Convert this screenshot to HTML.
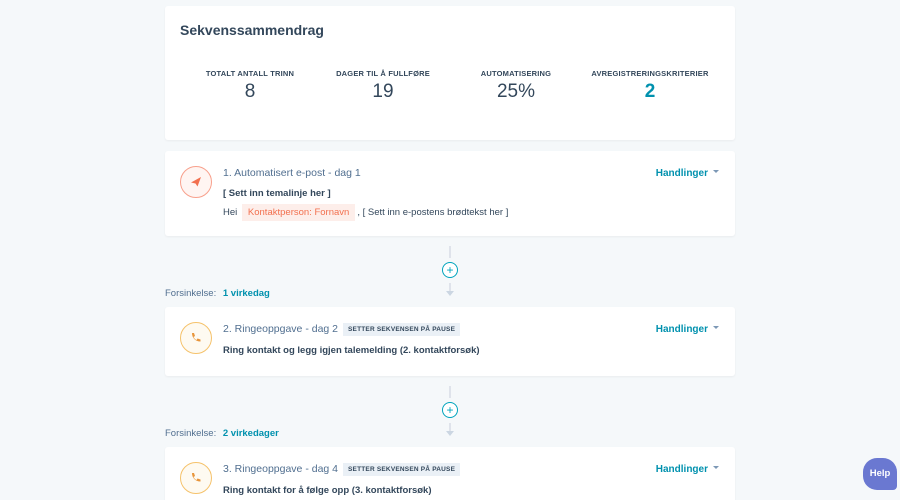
<!DOCTYPE html>
<html><head><meta charset="utf-8"><style>
html,body{margin:0;width:900px;height:500px;overflow:hidden}
body{background:#f5f8fa;font-family:"Liberation Sans",sans-serif;color:#33475b;position:relative}
.card{position:absolute;left:165px;width:570px;background:#fff;border-radius:3px;box-shadow:0 1px 2px rgba(0,0,0,.05)}
.abs{position:absolute}
.h{font-size:14px;font-weight:bold;left:15px;top:16px}
.stat{position:absolute;top:63px;width:140px;text-align:center}
.stat .l{font-size:7.5px;font-weight:bold;letter-spacing:.2px}
.stat .v{font-size:19px;margin-top:3px}
.icon{position:absolute;left:15px;width:32px;height:32px;border-radius:50%;box-sizing:border-box}
.em{border:1px solid #f8a08c;background:#fff5f2}
.ph{border:1px solid #f5c26b;background:#fefaf1}
.title{position:absolute;left:58px;font-size:10.5px;color:#516f90}
.bold{position:absolute;left:58px;font-size:9.5px;font-weight:bold}
.act{position:absolute;right:16px;font-size:10px;font-weight:bold;color:#0091ae}
.act:after{content:"";display:inline-block;margin-left:5px;border:3px solid transparent;border-top:3px solid #7c98b6;vertical-align:0px}
.tag{display:inline-block;background:#eaf0f6;font-size:6.5px;font-weight:bold;padding:3px 5px;margin-left:5px;color:#33475b;letter-spacing:.2px;vertical-align:1px}
.line{position:absolute;left:449px;width:2px;background:#dfe3eb}
.plus{position:absolute;left:442px;width:14px;height:14px;border:1px solid #00a4bd;border-radius:50%;background:#fff;color:#00a4bd;font-size:12px;line-height:14px;text-align:center}
.arrow{position:absolute;left:446px;border:4px solid transparent;border-top:5px solid #cbd6e2}
.delay{position:absolute;left:165px;font-size:9.5px;color:#516f90}
.delay b{color:#0091ae;margin-left:4px}
</style></head><body>
<div class="card" style="top:6px;height:134px">
 <div class="abs h">Sekvenssammendrag</div>
 <div class="stat" style="left:15px"><div class="l">TOTALT ANTALL TRINN</div><div class="v">8</div></div>
 <div class="stat" style="left:148px"><div class="l">DAGER TIL Å FULLFØRE</div><div class="v">19</div></div>
 <div class="stat" style="left:281px"><div class="l">AUTOMATISERING</div><div class="v">25%</div></div>
 <div class="stat" style="left:415px"><div class="l">AVREGISTRERINGSKRITERIER</div><div class="v" style="color:#0091ae;font-weight:bold">2</div></div>
</div>
<div class="card" style="top:151px;height:85px">
 <div class="icon em" style="top:15px"><svg width="30" height="30" viewBox="0 0 30 30"><path d="M10 15.5l10-5.5-3.5 9.5-2-3z" fill="#f2704f"/></svg></div>
 <div class="title" style="top:16px">1. Automatisert e-post - dag 1</div>
 <div class="act" style="top:17px">Handlinger</div>
 <div class="bold" style="top:37px">[ Sett inn temalinje her ]</div>
 <div class="abs" style="left:58px;top:56px;font-size:9.5px">Hei <span style="background:#fdeeea;color:#f2704f;padding:3px 6px;margin:0 2px">Kontaktperson: Fornavn</span>, [ Sett inn e-postens brødtekst her ]</div>
</div>
<div class="line" style="top:246px;height:12px"></div>
<div class="plus" style="top:262px">+</div>
<div class="line" style="top:283px;height:8px"></div>
<div class="arrow" style="top:291px"></div>
<div class="delay" style="top:288px">Forsinkelse: <b>1 virkedag</b></div>
<div class="card" style="top:307px;height:69px">
 <div class="icon ph" style="top:15px"><svg width="30" height="30" viewBox="0 0 30 30"><path d="M11 10l2 0 1 3-1.5 1c.6 1.3 1.7 2.4 3 3l1-1.5 3 1v2c-5 0-8.5-3.5-8.5-8.5z" fill="#e8953a"/></svg></div>
 <div class="title" style="top:16px">2. Ringeoppgave - dag 2<span class="tag">SETTER SEKVENSEN PÅ PAUSE</span></div>
 <div class="act" style="top:17px">Handlinger</div>
 <div class="bold" style="top:38px">Ring kontakt og legg igjen talemelding (2. kontaktforsøk)</div>
</div>
<div class="line" style="top:386px;height:12px"></div>
<div class="plus" style="top:402px">+</div>
<div class="line" style="top:423px;height:8px"></div>
<div class="arrow" style="top:431px"></div>
<div class="delay" style="top:428px">Forsinkelse: <b>2 virkedager</b></div>
<div class="card" style="top:447px;height:60px">
 <div class="icon ph" style="top:15px"><svg width="30" height="30" viewBox="0 0 30 30"><path d="M11 10l2 0 1 3-1.5 1c.6 1.3 1.7 2.4 3 3l1-1.5 3 1v2c-5 0-8.5-3.5-8.5-8.5z" fill="#e8953a"/></svg></div>
 <div class="title" style="top:16px">3. Ringeoppgave - dag 4<span class="tag">SETTER SEKVENSEN PÅ PAUSE</span></div>
 <div class="act" style="top:17px">Handlinger</div>
 <div class="bold" style="top:38px">Ring kontakt for å følge opp (3. kontaktforsøk)</div>
</div>
<div class="abs" style="left:863px;top:458px;width:34px;height:32px;background:#6a78d1;border-radius:14px 14px 4px 14px;color:#fff;font-size:9.5px;font-weight:bold;line-height:32px;text-align:center">Help</div>
</body></html>
